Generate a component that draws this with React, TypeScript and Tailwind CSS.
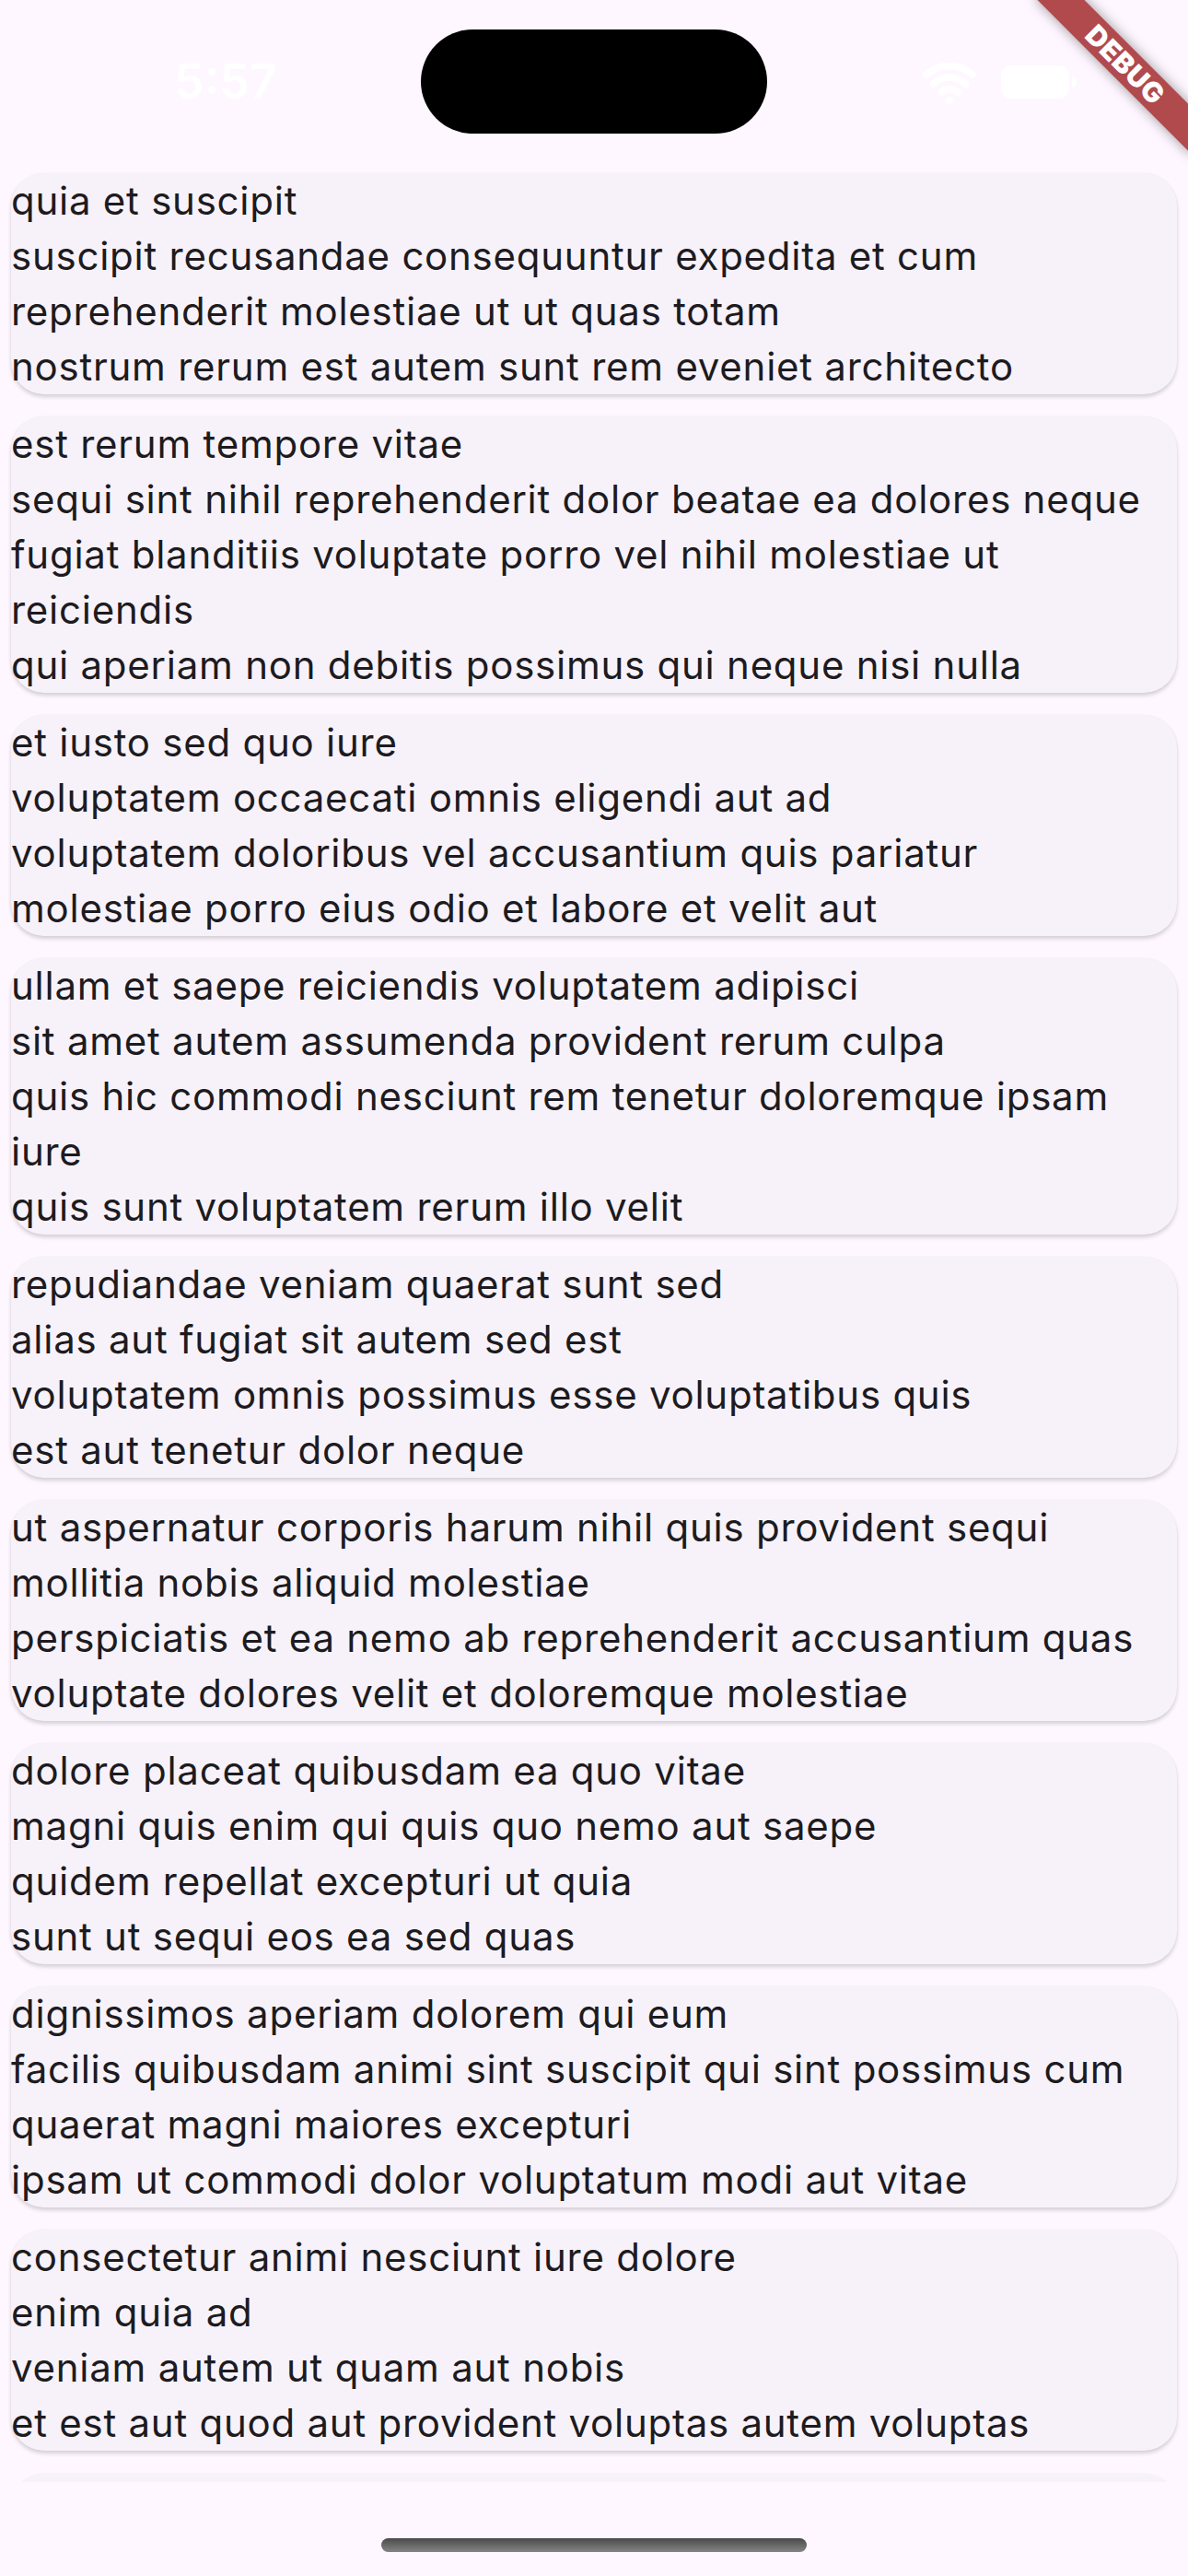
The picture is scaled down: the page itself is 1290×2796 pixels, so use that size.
import { Wifi } from 'lucide-react';

// Post bodies, split the way the device wraps them.
const posts: string[][] = [
  [
    'quia et suscipit',
    'suscipit recusandae consequuntur expedita et cum',
    'reprehenderit molestiae ut ut quas totam',
    'nostrum rerum est autem sunt rem eveniet architecto',
  ],
  [
    'est rerum tempore vitae',
    'sequi sint nihil reprehenderit dolor beatae ea dolores neque',
    'fugiat blanditiis voluptate porro vel nihil molestiae ut',
    'reiciendis',
    'qui aperiam non debitis possimus qui neque nisi nulla',
  ],
  [
    'et iusto sed quo iure',
    'voluptatem occaecati omnis eligendi aut ad',
    'voluptatem doloribus vel accusantium quis pariatur',
    'molestiae porro eius odio et labore et velit aut',
  ],
  [
    'ullam et saepe reiciendis voluptatem adipisci',
    'sit amet autem assumenda provident rerum culpa',
    'quis hic commodi nesciunt rem tenetur doloremque ipsam',
    'iure',
    'quis sunt voluptatem rerum illo velit',
  ],
  [
    'repudiandae veniam quaerat sunt sed',
    'alias aut fugiat sit autem sed est',
    'voluptatem omnis possimus esse voluptatibus quis',
    'est aut tenetur dolor neque',
  ],
  [
    'ut aspernatur corporis harum nihil quis provident sequi',
    'mollitia nobis aliquid molestiae',
    'perspiciatis et ea nemo ab reprehenderit accusantium quas',
    'voluptate dolores velit et doloremque molestiae',
  ],
  [
    'dolore placeat quibusdam ea quo vitae',
    'magni quis enim qui quis quo nemo aut saepe',
    'quidem repellat excepturi ut quia',
    'sunt ut sequi eos ea sed quas',
  ],
  [
    'dignissimos aperiam dolorem qui eum',
    'facilis quibusdam animi sint suscipit qui sint possimus cum',
    'quaerat magni maiores excepturi',
    'ipsam ut commodi dolor voluptatum modi aut vitae',
  ],
  [
    'consectetur animi nesciunt iure dolore',
    'enim quia ad',
    'veniam autem ut quam aut nobis',
    'et est aut quod aut provident voluptas autem voluptas',
  ],
];

function StatusBar() {
  return (
    <div className="h-[176px] pt-[32px]">
      <div className="flex h-[113px] items-center">
        <div className="w-[457px] pl-[189px]">
          <span className="text-[52px] font-semibold leading-none text-white">5:57</span>
        </div>
        <div className="h-[113px] w-[376px] rounded-full bg-black" />
        <div className="flex flex-1 items-center gap-[26px] pl-[168px]">
          <Wifi size={60} strokeWidth={3} className="text-white" />
          <div className="flex items-center gap-[3px]">
            <div className="h-[36px] w-[74px] rounded-[11px] bg-white" />
            <div className="h-[12px] w-[5px] rounded-r-full bg-white" />
          </div>
        </div>
      </div>
    </div>
  );
}

function PostCard({ lines }: { lines: string[] }) {
  return (
    <div className="shrink-0 rounded-[36px] bg-[#F7F2FA] shadow-[0_3px_4px_rgba(0,0,0,0.16),0_0_2px_rgba(0,0,0,0.05)]">
      {lines.map((line, i) => (
        <div key={i} className="whitespace-nowrap text-[42px] leading-[60px] tracking-[0.75px] text-[#1D1B20]">
          {line}
        </div>
      ))}
    </div>
  );
}

function DebugBanner() {
  return (
    <div className="pointer-events-none absolute left-[1102px] top-[52px] flex h-[36px] w-[240px] rotate-45 items-center justify-center bg-[#B04A4D] shadow-[0_0_14px_rgba(0,0,0,0.4)]">
      <span className="text-[30px] font-black leading-none tracking-[0.5px] text-white">DEBUG</span>
    </div>
  );
}

export default function App() {
  return (
    <div
      className="relative flex h-[2796px] w-[1290px] flex-col overflow-hidden bg-[#FEF7FF]"
      style={{ fontFamily: 'Inter, "Noto Sans", sans-serif' }}
    >
      <StatusBar />
      <div className="flex h-[2518px] flex-col gap-[24px] overflow-hidden px-[12px] pt-[12px]">
        {posts.map((lines, i) => (
          <PostCard key={i} lines={lines} />
        ))}
        {/* next post, scrolled just into view */}
        <div className="h-[240px] shrink-0 rounded-[36px] bg-[#F7F2FA]" />
      </div>
      <div className="flex h-[102px] justify-center pt-[61px]">
        <div className="h-[15px] w-[462px] rounded-full bg-gradient-to-b from-[#4a4a4a] to-[#858585]" />
      </div>
      <DebugBanner />
    </div>
  );
}
